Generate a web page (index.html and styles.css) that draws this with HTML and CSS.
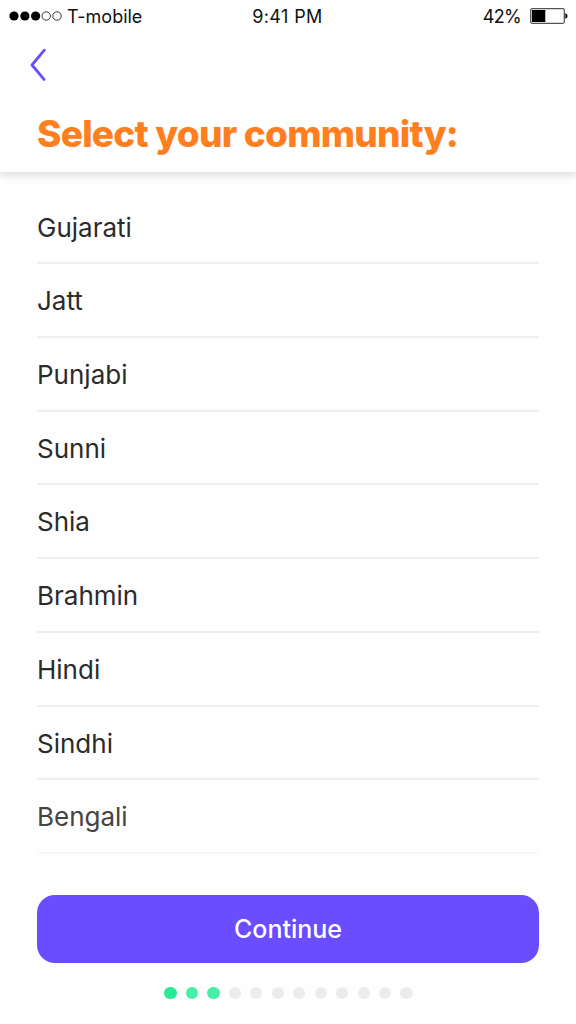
FILE: index.html
```
<!DOCTYPE html>
<html lang="en">
<head>
  <meta charset="UTF-8" />
  <meta name="viewport" content="width=device-width, initial-scale=1.0"/>
  <title>Select your community</title>
  <link rel="stylesheet" href="styles.css">
</head>
<body>
  <div class="screen">
    <header class="header">
      <div class="status-bar">
        <div class="carrier">
          <svg class="signal" width="54" height="12" viewBox="0 0 54 12">
            <circle cx="5" cy="6" r="4.6" />
            <circle cx="15.9" cy="6" r="4.6" />
            <circle cx="26.6" cy="6" r="4.6" />
            <circle class="empty" cx="37.2" cy="6" r="4.2" />
            <circle class="empty" cx="48" cy="6" r="4.2" />
          </svg>
          <span class="carrier-name">T-mobile</span>
        </div>
        <span class="time">9:41 PM</span>
        <div class="power">
          <span class="percent">42%</span>
          <svg class="battery" width="38" height="16" viewBox="0 0 38 16">
            <rect class="case" x="0.7" y="0.7" width="33.6" height="14.6" rx="1.5" />
            <rect x="2" y="2" width="13.3" height="12" />
            <path d="M35.3 5.3 Q37.6 6 37.6 8 Q37.6 10 35.3 10.7 Z" />
          </svg>
        </div>
      </div>
      <button class="back" aria-label="Back">
        <svg width="16" height="34" viewBox="0 0 16 34">
          <path d="M14.3 2.2 L2 17 L14 31.4" />
        </svg>
      </button>
      <h1>Select your community:</h1>
    </header>

    <ul class="list">
      <li>Gujarati</li>
      <li>Jatt</li>
      <li>Punjabi</li>
      <li>Sunni</li>
      <li>Shia</li>
      <li>Brahmin</li>
      <li>Hindi</li>
      <li>Sindhi</li>
      <li class="fading">Bengali</li>
    </ul>

    <footer class="footer">
      <button class="continue">Continue</button>
      <div class="steps">
        <span class="first"></span>
        <span class="done"></span>
        <span class="done"></span>
        <span></span>
        <span></span>
        <span></span>
        <span></span>
        <span></span>
        <span></span>
        <span></span>
        <span></span>
        <span></span>
      </div>
    </footer>
  </div>
</body>
</html>
```
FILE: styles.css
```
* {
  box-sizing: border-box;
}
body {
  font-family: Inter, sans-serif;
  background: #fefefe;
  color: #2b2b2b;
  margin: 0;
}
button {
  font-family: inherit;
  border: none;
  padding: 0;
  cursor: pointer;
}
svg {
  display: block;
}
.screen {
  height: 1024px;
  display: flex;
  flex-direction: column;
  overflow: hidden;
}
.header {
  height: 172px;
  background: #fefefe;
  box-shadow: 0 3px 8px rgba(0, 0, 0, 0.14);
}
.status-bar {
  height: 32px;
  padding: 0 8px 0 9px;
  display: grid;
  grid-template-columns: 1fr auto 1fr;
  align-items: center;
  font-size: 18px;
  line-height: 30px;
  color: #111;
}
.status-bar span {
  padding-top: 2px;
}
.carrier, .power {
  display: flex;
  align-items: center;
}
.power {
  justify-content: flex-end;
}
.signal {
  margin-right: 4px;
}
.signal .empty {
  fill: none;
  stroke: #222;
  stroke-width: 0.9;
}
.time {
  margin-right: 2px;
  letter-spacing: 0.4px;
}
.percent {
  letter-spacing: -0.7px;
}
.battery {
  margin-left: 9px;
}
.battery .case {
  fill: none;
  stroke: #555;
  stroke-width: 1.3;
}
.back {
  display: block;
  margin: 16px 0 0 30px;
  background: none;
}
.back path {
  fill: none;
  stroke: #694dff;
  stroke-width: 2.8;
  stroke-linecap: round;
  stroke-linejoin: round;
}
h1 {
  margin: 29px 0 0 37px;
  font-size: 37px;
  line-height: 46px;
  font-weight: 800;
  letter-spacing: -0.76px;
  color: #ff7e20;
}
.list {
  list-style: none;
  margin: 18.5px 37px 0;
  padding: 0;
}
.list li {
  height: 73.72px;
  border-bottom: 2px solid #eee;
  font-size: 26px;
  line-height: 73px;
}
.list .fading {
  color: #444;
  border-color: #f7f7f7;
}
.footer {
  margin: auto 37px 24.8px;
}
.continue {
  display: block;
  width: 100%;
  height: 67.5px;
  padding-top: 1px;
  border-radius: 18px;
  background: #694dff;
  color: #fff;
  font-size: 25px;
  font-weight: 500;
}
.steps {
  display: flex;
  justify-content: center;
  gap: 9.1px;
  margin: 24.3px -1px 0 0;
}
.steps span {
  width: 12.4px;
  height: 12.4px;
  border-radius: 50%;
  background: #ececec;
}
.steps .first {
  background: #29e996;
}
.steps .done {
  background: #46eea7;
}
```
